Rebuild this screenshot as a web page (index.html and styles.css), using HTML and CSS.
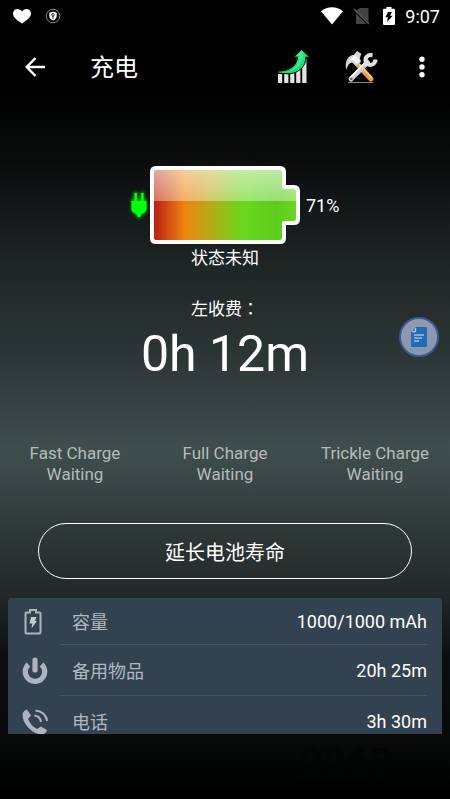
FILE: index.html
```html
<!DOCTYPE html>
<html lang="zh-CN">
<head>
<meta charset="utf-8">
<meta name="viewport" content="width=device-width, initial-scale=1">
<title>充电</title>
<link rel="stylesheet" href="styles.css">
</head>
<body>
<div class="status-bar">
  <div class="status-group">
    <svg class="icon-heart" width="18" height="15" viewBox="0 0 18 15" aria-hidden="true"><path fill="#fff" d="M9 14.6C5 11.700 0 8.600 0 4.500 0 1.800 2 0 4.500 0 6.500 0 8 1 9 2.600 10 1 11.500 0 13.500 0 16 0 18 1.800 18 4.500c0 4.100-5 7.200-9 10.100z"/></svg>
    <svg width="16" height="16" viewBox="0 0 16 16" aria-hidden="true"><circle cx="8" cy="8" r="6.800" fill="none" stroke="#8c8c8c" stroke-width="1"/><path fill="#fff" d="M4.300 4.700 8 3.600l3.700 1.100v3.100c0 2.400-1.600 3.900-3.700 4.800-2.100-.9-3.700-2.400-3.700-4.800z"/><circle cx="8" cy="6.800" r="1.300" fill="none" stroke="#111" stroke-width=".9"/><path stroke="#111" d="M8 8v2.600"/></svg>
  </div>
  <div class="status-group">
    <svg width="22" height="18" viewBox="0 0 22 18" aria-hidden="true"><path fill="#fff" d="M11 17.500 0 4.300C6-1 16-1 22 4.300z"/></svg>
    <svg width="18" height="18" viewBox="0 0 18 18" aria-hidden="true"><path fill="#444" d="M7 1h8.500v14.500L3 3.500zM3 6.200 13.500 17H3z"/><path stroke="#5a5a5a" stroke-width="1.500" d="m1 2 15 15"/></svg>
    <svg class="icon-charge" width="12" height="18" viewBox="0 0 12 18" aria-hidden="true"><path fill="#fff" fill-rule="evenodd" d="M3.500 0h5v1.800H11q1 0 1 1V17q0 1-1 1H1q-1 0-1-1V2.800q0-1 1-1h2.500zM5 5 2.400 10.300h2.500L4 15l5.800-6.200H7L9 5z"/></svg>
    <span class="clock">9:07</span>
  </div>
</div>

<header class="toolbar">
  <button class="tool back" type="button" aria-label="返回">
    <svg width="20" height="20" viewBox="0 0 20 20" aria-hidden="true"><path fill="none" stroke="#fff" stroke-width="2.400" d="M20 10H2M10.500 1 1.700 10l8.800 9"/></svg>
  </button>
  <h1 class="title">充电</h1>
  <button class="tool" type="button" aria-label="统计">
    <svg width="32" height="34" viewBox="0 0 32 34" aria-hidden="true">
      <path fill="#e2e5e3" d="M0 24h4.200v9H0zM6.200 24h4.200v9H6.200zM12.200 22h4.200v11h-4.200zM18.200 17h4.200v16h-4.200zM24.200 9h4.300v24h-4.300z"/>
      <path fill="#14e07c" stroke="#000" stroke-width="1" d="M0 21C8 21.500 18.500 18 19.500 7.200h-4L23.500-.5 32 7.200h-4.200C28.500 16 20 24.500 9 23.800L0 23z"/>
      <path fill="#6df0ac" opacity=".5" d="M10 21.500C17 19.500 21 14 21.500 6h-3L23.500 1l2 2.500c0 9-5 16-15.500 18z"/>
    </svg>
  </button>
  <button class="tool" type="button" aria-label="工具">
    <svg width="34" height="34" viewBox="0 0 34 34" aria-hidden="true">
      <path stroke="#e9a24a" stroke-width="5" stroke-linecap="round" d="m14 15 13 14"/>
      <path stroke="#ffd797" stroke-width="1.500" d="m15 14.500 13 13"/>
      <path stroke="#888" stroke-width="1" d="M4 32.500h25"/>
      <path fill="#d5d7da" d="M2.500 20C0 12 4 5.500 10 4.800L13 1l4.300 2.800-1.500 4.400 1.200 3.600-5 4.200-4-3.500c-3 .5-4.500 3-5.500 7.500z"/>
      <path fill="#f8f8f8" d="M6 9.500 11 5l5 6-3.500 2.500-3-3z"/>
      <path stroke="#cfd2d5" stroke-width="5" stroke-linecap="round" d="M7 29 23.500 12.500"/>
      <path stroke="#fff" stroke-width="1.500" d="M6 28 22 11.500"/>
      <path fill="none" stroke="#e2e3e5" stroke-width="4" d="M28.500 5.200C23 4 19.800 9.300 22.500 13s8.500 2 9.200-3.500"/>
      <circle cx="7.300" cy="28.700" r="1.300" fill="#666"/>
    </svg>
  </button>
  <button class="tool more" type="button" aria-label="更多">
    <svg width="6" height="22" viewBox="0 0 6 22" aria-hidden="true"><g fill="#fff"><circle cx="3" cy="3.200" r="2.700"/><circle cx="3" cy="11" r="2.700"/><circle cx="3" cy="18.800" r="2.700"/></g></svg>
  </button>
</header>

<main class="content">
  <section class="battery">
    <svg class="plug" width="24" height="36" viewBox="0 0 24 36" aria-hidden="true">
      <defs><filter id="glow" x="-50%" y="-50%" width="200%" height="200%"><feGaussianBlur stdDeviation="1.800"/></filter></defs>
      <path filter="url(#glow)" fill="#0b0" stroke="#0a0" stroke-width="2" d="M8.500 6h2.200v7h4.600V6h2.200v7H20v10l-5 5.500-2 2-2-2L6 23V13h2.500z"/>
      <path fill="#0f1" d="M8.500 6h2.400v8h4.200V6h2.400v8h3v8.500q-1 3-5 4.500l-1.500 3h-2L10.500 27q-4-1.500-5-4.500V14h3z"/>
    </svg>
    <svg width="150" height="78" viewBox="0 0 150 78" role="img" aria-label="电池">
      <defs>
        <linearGradient id="charge"><stop offset="0" stop-color="#b81712"/><stop offset=".05" stop-color="#c02a12"/><stop offset=".23" stop-color="#ed8410"/><stop offset=".4" stop-color="#b9aa17"/><stop offset=".62" stop-color="#68d71d"/><stop offset=".85" stop-color="#5dcd1d"/><stop offset="1" stop-color="#6bdc20"/></linearGradient>
        <linearGradient id="gloss" x2="0" y2="1"><stop offset="0" stop-color="#fff" stop-opacity=".62"/><stop offset="1" stop-color="#fff" stop-opacity=".36"/></linearGradient>
        <clipPath id="cell"><path d="M5 2h126q3 0 3 4v15h10q4 0 4 4v28q0 4-4 4h-10v15q0 4-4 4H6q-4 0-4-4V6q0-4 4-4z"/></clipPath>
      </defs>
      <g clip-path="url(#cell)"><path fill="url(#charge)" d="M0 0h150v78H0z"/><path fill="url(#gloss)" d="M0 0h150v35H0z"/></g>
      <path fill="none" stroke="#fff" stroke-width="4" stroke-linejoin="round" d="M6 2h124q4 0 4 4v15h10q4 0 4 4v28q0 4-4 4h-10v15q0 4-4 4H6q-4 0-4-4V6q0-4 4-4z"/>
    </svg>
    <span class="percent">71%</span>
  </section>
  <p class="note">状态未知</p>

  <p class="note remaining-label">左收费<span class="colon" lang="zh-TW">：</span></p>
  <p class="remaining">0h 12m</p>

  <ul class="stages">
    <li>Fast Charge<br>Waiting</li>
    <li>Full Charge<br>Waiting</li>
    <li>Trickle Charge<br>Waiting</li>
  </ul>

  <button class="extend" type="button">延长电池寿命</button>

  <dl class="card">
    <div class="row">
      <svg width="26" height="28" viewBox="0 0 26 28" aria-hidden="true"><path fill="none" stroke="#adb4c0" stroke-width="2" d="M4.500 4.500H8V2h6v2.500h3.500q1 0 1 1v19q0 1-1 1h-13q-1 0-1-1v-19q0-1 1-1z"/><path fill="#c3c8d1" d="M9 9h5.500L13 13h2l-5.500 7.500.8-5H7.500z"/></svg>
      <div class="line"><dt>容量</dt><dd>1000/1000 mAh</dd></div>
    </div>
    <div class="row">
      <svg width="26" height="28" viewBox="0 0 26 28" aria-hidden="true"><g fill="none" stroke="#adb4c0" stroke-width="5.200"><path d="M6.500 7.500a9.700 9.700 0 1 0 13 0"/><path stroke-linecap="round" d="M13 3V13"/></g></svg>
      <div class="line"><dt>备用物品</dt><dd>20h 25m</dd></div>
    </div>
    <div class="row">
      <svg width="26" height="28" viewBox="0 0 26 28" aria-hidden="true"><path fill="#adb4c0" d="m5 1.500 4 6-3 3.500q3 7 9 10l4-2.500 6 3.500c-.5 3-4 5-7 4.300C8 24.500-1 13 .8 5Q2 2 5 1.500z"/><g fill="none" stroke="#adb4c0" stroke-width="2"><path d="M12.500 7.500q5.500.5 6.500 6.500"/><path d="M13.500 2.500Q24 4 25 13"/></g></svg>
      <div class="line"><dt>电话</dt><dd>3h 30m</dd></div>
    </div>
  </dl>
</main>
<footer class="footer">2265</footer>

<button class="floating" type="button" aria-label="文档">
  <svg width="16" height="20" viewBox="0 0 16 20" aria-hidden="true"><path fill="#1e6cb9" d="M5 0h10q1 0 1 1v18q0 1-1 1H1q-1 0-1-1V5z"/><path fill="none" stroke="#a9bdd6" stroke-width="1.400" d="M1 4.500h3.500V1M3 8h10M3 11h8M3 14h5"/></svg>
</button>
</body>
</html>
```
FILE: styles.css
```css
* {
  box-sizing: border-box;
}

body {
  display: flex;
  flex-direction: column;
  height: 100vh;
  margin: 0;
  overflow: hidden;
  color: #fff;
  font-family: Roboto, "Noto Sans CJK SC", sans-serif;
  background: linear-gradient(#000 11%, #0a0c0c 20%, #1e2525 33%, #2c3535 44%, #354040 50%, #3f4e4d 56%, #3a4746 60%, #2c3434 68%, #222a2a 74%, #0c0f0f 82%, #080a0a 92%, #000 99%);
}

button {
  margin: 0;
  padding: 0;
  border: 0;
  color: inherit;
  font: inherit;
  background: none;
}

svg {
  display: block;
  flex: none;
  overflow: visible;
}

p,
ul,
dl,
dd,
h1 {
  margin: 0;
}

.status-bar {
  display: flex;
  justify-content: space-between;
  flex: none;
  height: 32px;
  padding: 0 10px 0 13px;
}

.status-group {
  display: flex;
  align-items: center;
  gap: 10px;
}

.status-group:first-child {
  gap: 14px;
}

.icon-charge {
  margin-left: 2px;
}

.clock {
  font-size: 18px;
}

.toolbar {
  display: flex;
  align-items: center;
  flex: none;
  height: 70px;
  padding: 0 20px 0 21px;
}

.tool {
  display: grid;
  place-items: center;
  width: 34px;
  height: 48px;
  margin-left: 33px;
}

.back {
  width: 28px;
  margin-left: 0;
}

.more {
  width: 16px;
  margin-left: 36px;
}

.title {
  flex: 1;
  margin-left: 41px;
  padding-bottom: 4px;
  font-size: 24px;
  font-weight: 400;
}

.content {
  display: flex;
  flex-direction: column;
  flex: 1;
  min-height: 0;
  padding: 64px 8px 0;
  overflow: hidden;
  text-align: center;
}

.battery {
  display: grid;
  grid-template-columns: 1fr 150px 1fr;
  align-items: center;
  flex: none;
}

.plug {
  justify-self: end;
}

.percent {
  padding-left: 6px;
  font-size: 18px;
  text-align: left;
}

.note {
  flex: none;
  height: 29px;
  font-size: 17px;
  line-height: 29px;
}

.remaining-label {
  margin-top: 20px;
}

.colon {
  font-family: "Noto Sans CJK TC", sans-serif;
}

.remaining {
  flex: none;
  font-size: 50px;
  line-height: 64px;
}

.stages {
  display: grid;
  grid-template-columns: repeat(3, 1fr);
  flex: none;
  margin: 57px -8px 0;
  padding: 0;
  color: #b4bbba;
  font-size: 17px;
  line-height: 21px;
  list-style: none;
}

.extend {
  flex: none;
  height: 56px;
  margin: 38px 30px 19px;
  border: 1px solid #fff;
  border-radius: 28px;
  font-size: 20px;
}

.card {
  flex: none;
  padding-left: 14px;
  padding-right: 15px;
  border-radius: 4px;
  background: #334250;
}

.row {
  display: flex;
  align-items: center;
  gap: 12px;
  height: 51px;
}

.row:first-child {
  height: 47px;
}

.line {
  display: flex;
  align-items: center;
  justify-content: space-between;
  align-self: stretch;
  flex: 1;
  padding-left: 12px;
  border-bottom: 1px solid #4a5461;
}

dt {
  color: #b0b8c2;
  font-size: 18px;
}

dd {
  font-size: 18px;
}

.footer {
  flex: none;
  height: 65px;
  padding: 10px 58px 0 0;
  color: #030404;
  font-size: 40px;
  font-weight: 700;
  line-height: 40px;
  text-align: right;
}

.floating {
  position: absolute;
  top: 317px;
  right: 11px;
  display: grid;
  place-items: center;
  width: 40px;
  height: 40px;
  border: 2px solid #3c5a95;
  border-radius: 50%;
  background: linear-gradient(#9298ad, #8798ab);
}
```
